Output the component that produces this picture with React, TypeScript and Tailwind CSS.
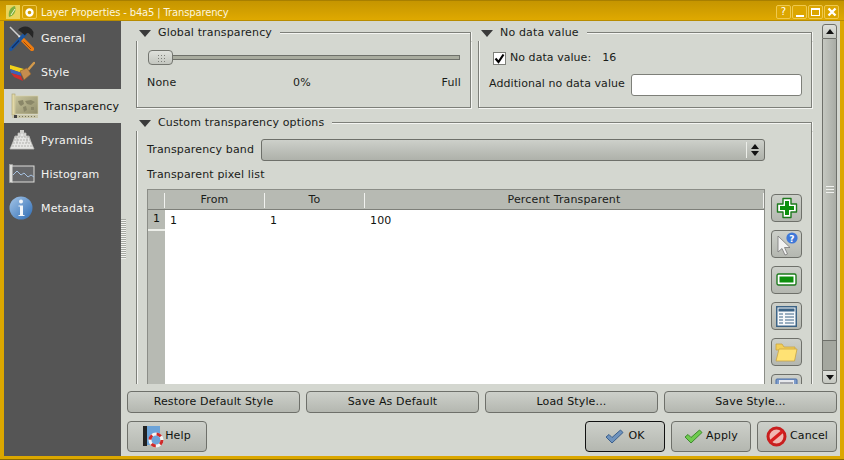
import React from "react";

const btn = "flex items-center justify-center rounded-[4px] border border-[#6e706a] bg-gradient-to-b from-[#cdd0ca] to-[#b4b7b0] text-[#10120f]";

function Tri() {
  return <svg width="12" height="7" viewBox="0 0 12 7" className="shrink-0"><path d="M0 0H12L6 7Z" fill="#3a3a3a" /></svg>;
}

function Group({ title, className, children }: { title: string; className: string; children: React.ReactNode }) {
  return (
    <div className={"flex flex-col " + className}>
      <div className="flex h-[17px] shrink-0 items-start">
        <div className="mt-[4px] w-[3px] shrink-0" />
        <div className="mt-[6px]"><Tri /></div>
        <span className="ml-[7px] whitespace-nowrap leading-[17px] text-[#1a1c19]">{title}</span>
        <div className="mb-0 ml-[8px] mt-[8px] h-[9px] flex-1 border-r border-t border-[#7d7f79] shadow-[inset_0_1px_0_#f4f5f2,1px_0_0_#f4f5f2]" />
      </div>
      <div className="min-h-0 flex-1 border-b border-l border-r border-[#7d7f79] shadow-[1px_1px_0_#f4f5f2,inset_1px_0_0_#f4f5f2]">{children}</div>
    </div>
  );
}

function Tools() {
  return (
    <svg width="25" height="25" viewBox="0 0 25 25">
      <path d="M1 1L11 11" stroke="#d0d0d0" strokeWidth="1.5" />
      <path d="M10 10L13 13" stroke="#ececec" strokeWidth="2.4" />
      <path d="M13 13L23 23" stroke="#ee7c10" strokeWidth="4.4" strokeLinecap="round" />
      <path d="M14.5 15.5L22 23" stroke="#9c4804" strokeWidth="1" />
      <path d="M2 23L16 8" stroke="#1c56a0" strokeWidth="3.8" strokeLinecap="round" />
      <path d="M3 22L10 14.5" stroke="#0f2f66" strokeWidth="1.2" />
      <path d="M9 4C13 -1 21 -1 24.5 6L24 12L20.5 8C19 6 17 7 16 9.5L12 6C11 5 10 5 9 4Z" fill="#262626" />
    </svg>
  );
}

function StyleIcon() {
  return (
    <svg width="26" height="22" viewBox="0 0 26 22">
      <path d="M1 4L15 8L13 12L1 8Z" fill="#f2d21a" />
      <path d="M1 8L13 12L12 15L2 12Z" fill="#3f62b8" />
      <path d="M2 12L12 15L14 20L5 16Z" fill="#d42d2d" />
      <path d="M18 10L25 2" stroke="#d39a4b" strokeWidth="2.4" strokeLinecap="round" />
      <path d="M11 10L18 7L22 13L15 19Z" fill="#c58d4e" stroke="#8a5f2f" strokeWidth="0.6" />
    </svg>
  );
}

function MapIcon() {
  return (
    <svg width="28" height="26" viewBox="0 0 28 26">
      <defs>
        <linearGradient id="mapg" x1="0" y1="0" x2="1" y2="1"><stop offset="0" stopColor="#c9c59c" /><stop offset="1" stopColor="#8f8c6b" /></linearGradient>
      </defs>
      <rect x="1" y="1" width="3" height="21" fill="#e2d9a8" stroke="#a79e6d" strokeWidth="0.6" />
      <rect x="4" y="3" width="23" height="18" fill="url(#mapg)" stroke="#d9d3a8" strokeWidth="0.6" />
      <path d="M7 8L12 7L13 11L10 13L8 11ZM14 8L20 7L24 9L20 12L16 11ZM12 14L15 13L16 17L13 19ZM20 14L23 14L23 17L20 17Z" fill="#8a8768" />
      <rect x="1" y="22" width="26" height="3" fill="#c8c5a8" />
      <rect x="3" y="22" width="3" height="3" fill="#444" />
      <path d="M8 23.5H26" stroke="#77765f" strokeDasharray="1 2" />
    </svg>
  );
}

function PyramidIcon() {
  return (
    <svg width="26" height="22" viewBox="0 0 26 22">
      <path d="M9 4H17V7H20L22 13L25 20H1L4 13L6 7H9Z" fill="#e6e6e4" stroke="#bdbdb9" strokeWidth="0.8" />
      <path d="M11 1H15V4H11Z" fill="#cfcfcc" />
      <path d="M6 8H20M5 11H21M4 14H22M3 17H23" stroke="#9b9b98" strokeWidth="0.7" strokeDasharray="2 1" />
      <path d="M11 4V8M15 4V8M8 8V14M18 8V14" stroke="#a8a8a5" strokeWidth="0.6" />
    </svg>
  );
}

function HistIcon() {
  return (
    <svg width="26" height="20" viewBox="0 0 26 20">
      <rect x="0.5" y="0.5" width="3" height="18" fill="#dededb" stroke="#a5a5a2" strokeWidth="0.6" />
      <rect x="3" y="2" width="22" height="16" fill="#666769" stroke="#dcdcd9" strokeWidth="1" />
      <path d="M4 11L8 7L12 11L15 9L19 13L22 11L25 13" fill="none" stroke="#a6c1e0" strokeWidth="1" />
    </svg>
  );
}

function InfoIcon() {
  return (
    <svg width="24" height="24" viewBox="0 0 24 24">
      <defs>
        <linearGradient id="infog" x1="0" y1="0" x2="1" y2="1"><stop offset="0" stopColor="#a5c6e8" /><stop offset="1" stopColor="#2e6cb4" /></linearGradient>
      </defs>
      <circle cx="12" cy="12" r="11.5" fill="url(#infog)" />
      <circle cx="12" cy="5.5" r="2" fill="#f2f6fa" />
      <path d="M9.5 9.5H14V19H15.5V20H9.5V19H11V10.5H9.5Z" fill="#f2f6fa" />
    </svg>
  );
}

function Side({ icon, label, active }: { icon: React.ReactNode; label: string; active?: boolean }) {
  return (
    <div className={active ? "flex h-[34px] items-center bg-[#d4d7d0] pl-[7px] text-[#10120f]" : "flex h-[34px] items-center pl-[5px] text-[#f3f3f1]"}>
      <div className={active ? "flex w-[33px] shrink-0 justify-start" : "flex w-[32px] shrink-0 justify-start"}>{icon}</div>
      <span className="whitespace-nowrap pt-[3px]">{label}</span>
    </div>
  );
}

function PlusIcon() {
  return <svg width="22" height="22" viewBox="0 0 22 22"><path d="M7 1.5H15V7H20.5V15H15V20.5H7V15H1.5V7H7Z" fill="#fff" stroke="#1d7a1d" strokeWidth="1.4" strokeLinejoin="round" /><path d="M9 4H13V9H18V13H13V18H9V13H4V9H9Z" fill="#0d900d" /></svg>;
}
function CursorHelp() {
  return (
    <svg width="24" height="26" viewBox="0 0 24 26">
      <path d="M3 5V21L7 17.5L10 24L12.5 23L9.5 16.5H15Z" fill="#f2f2f2" stroke="#777" strokeWidth="0.8" />
      <circle cx="17" cy="7" r="5.6" fill="#3f78d8" />
      <text x="17" y="10.5" fontSize="9" fontWeight="700" fill="#fff" textAnchor="middle" fontFamily="DejaVu Sans">?</text>
    </svg>
  );
}
function MinusIcon() {
  return <svg width="22" height="14" viewBox="0 0 22 14"><rect x="1" y="1" width="19" height="11" rx="1.5" fill="#fff" stroke="#1d7a1d" strokeWidth="1.4" /><rect x="3.5" y="3.5" width="14" height="6" fill="#0d900d" /></svg>;
}
function TableIcon() {
  return (
    <svg width="21" height="21" viewBox="0 0 21 21">
      <rect x="0.75" y="0.75" width="19.5" height="19.5" fill="#f7f9fb" stroke="#3d6486" strokeWidth="1.5" />
      <rect x="2.5" y="2.5" width="16" height="3" fill="#3d6486" />
      <path d="M3 8H7M9 8H18M3 11H7M9 11H18M3 14H7M9 14H18M3 17H7M9 17H18" stroke="#3d6486" strokeWidth="1" />
    </svg>
  );
}
function FolderIcon() {
  return (
    <svg width="23" height="19" viewBox="0 0 23 19">
      <path d="M1 1H7L9 4H20V7H1Z" fill="#f3cf58" stroke="#c9a443" strokeWidth="0.8" />
      <path d="M4 6H22L19.5 18H1Z" fill="#ffe274" stroke="#c9a443" strokeWidth="0.8" />
    </svg>
  );
}
function SaveIcon() {
  return (
    <svg width="23" height="20" viewBox="0 0 23 20">
      <rect x="1" y="1" width="21" height="18" rx="1" fill="#7d9bc9" stroke="#4a6ea8" />
      <rect x="4" y="2" width="15" height="12" fill="#e6e8ec" />
      <path d="M5 5H18M5 8H18M5 11H18" stroke="#60636a" />
    </svg>
  );
}
function IconBtn({ children }: { children: React.ReactNode }) {
  return <div className={btn + " h-[28px] w-[31px] shrink-0"}>{children}</div>;
}

function Check({ fill, edge }: { fill: string; edge: string }) {
  return <svg width="19" height="15" viewBox="0 0 19 15"><path d="M1 8L4 5.5L7 8.5L15.5 1L18 3.5L7 14Z" fill={fill} stroke={edge} strokeWidth="1" strokeLinejoin="round" /></svg>;
}

function HelpIcon() {
  return (
    <svg width="21" height="22" viewBox="0 0 21 22">
      <rect x="0" y="0" width="4" height="20" fill="#222" />
      <rect x="4" y="0" width="13" height="19" fill="#6ca3d8" />
      <circle cx="13" cy="14" r="6" fill="none" stroke="#f4f4f4" strokeWidth="3" />
      <circle cx="13" cy="14" r="6" fill="none" stroke="#cf2a2a" strokeWidth="3" strokeDasharray="4.7 4.7" />
    </svg>
  );
}
function CancelIcon() {
  return (
    <svg width="21" height="21" viewBox="0 0 21 21">
      <circle cx="10.5" cy="10.5" r="8.5" fill="#f0b9b3" stroke="#c81e1e" strokeWidth="3" />
      <path d="M4 16L17 5" stroke="#d81f1f" strokeWidth="3.2" />
    </svg>
  );
}

function TitleBtn({ children }: { children: React.ReactNode }) {
  return <div className="flex h-[14px] w-[15px] items-center justify-center rounded-[2px] border border-[#efc94e] bg-[#dca600] text-[10px] leading-none text-white">{children}</div>;
}

export default function App() {
  return (
    <div className="flex h-[460px] w-[844px] flex-col overflow-hidden border-b border-[#8a6a00] bg-[#dba700] font-['DejaVu_Sans',sans-serif] text-[11px] tracking-[0.15px]">
      <div className="flex h-[21px] shrink-0 items-center border-t border-b border-t-[#a87f00] border-b-[#b88c00] bg-gradient-to-b from-[#c59500] to-[#dfa900] pl-[6px] pr-[5px] pt-[3px]">
        <svg width="14" height="16" viewBox="0 0 14 16" className="shrink-0">
          <rect x="0" y="1" width="14" height="14" fill="#e9d45a" />
          <path d="M9 2C4 3 2 8 3 13C7 12 11 8 9 2Z" fill="#7fae3c" />
          <path d="M5 11L9 5" stroke="#f2f6d0" />
        </svg>
        <div className="ml-[2px] flex h-[14px] w-[15px] items-center justify-center rounded-[2px] border border-[#efc94e]">
          <svg width="9" height="9" viewBox="0 0 9 9"><circle cx="4.5" cy="4.5" r="3" fill="none" stroke="#fff" strokeWidth="2.4" /></svg>
        </div>
        <span className="ml-[4px] text-[10px] tracking-[-0.15px] text-[#fdf6dd]">Layer Properties - b4a5 | Transparency</span>
        <div className="ml-auto flex gap-[1px]">
          <TitleBtn>?</TitleBtn>
          <TitleBtn><span className="mt-[7px] h-[2px] w-[8px] bg-white" /></TitleBtn>
          <TitleBtn><span className="h-[8px] w-[9px] border border-t-2 border-white" /></TitleBtn>
          <TitleBtn>
            <svg width="10" height="10" viewBox="0 0 10 10"><path d="M1.5 1.5L8.5 8.5M8.5 1.5L1.5 8.5" stroke="#fff" strokeWidth="2.4" /></svg>
          </TitleBtn>
        </div>
      </div>

      <div className="mx-[4px] mb-[3px] flex min-h-0 flex-1 bg-[#d4d7d0]">
        <div className="flex w-[117px] shrink-0 flex-col bg-[#555555]">
          <Side icon={<Tools />} label="General" />
          <Side icon={<StyleIcon />} label="Style" />
          <Side icon={<MapIcon />} label="Transparency" active />
          <Side icon={<PyramidIcon />} label="Pyramids" />
          <Side icon={<HistIcon />} label="Histogram" />
          <Side icon={<InfoIcon />} label="Metadata" />
        </div>

        <div className="flex w-[5px] shrink-0 flex-col items-center justify-center">
          <div className="h-[40px] w-[5px] bg-[repeating-linear-gradient(to_bottom,#a5a8a1_0,#a5a8a1_1px,#f1f2ef_1px,#f1f2ef_2px)]" />
        </div>

        <div className="flex min-w-0 flex-1 flex-col pl-[1px] pr-[3px]">
          <div className="flex h-[363px] shrink-0 pt-[3px]">
            <div className="flex min-w-0 flex-1 flex-col overflow-hidden pl-[9px] pr-[10px]">
              <div className="flex h-[84px] shrink-0 gap-[7px]">
                <Group title="Global transparency" className="w-[335px]">
                  <div className="flex flex-col pl-[10px] pr-[9px] pt-[9px]">
                    <div className="relative ml-[1px] mr-[1px] flex h-[15px] items-center">
                      <div className="h-[5px] flex-1 border border-[#6e706a] bg-[#a9ac9f]" />
                      <div className="absolute left-0 top-0 flex h-[15px] w-[25px] items-center justify-center rounded-[4px] border border-[#73756f] bg-gradient-to-b from-[#dfe1dc] to-[#c3c6bf]">
                        <div className="h-[8px] w-[8px] bg-[radial-gradient(#7d7f79_1px,transparent_1px)] bg-[length:3px_3px]" />
                      </div>
                    </div>
                    <div className="mt-[10px] flex justify-between text-[#1a1c19]">
                      <span>None</span><span className="mr-[14px]">0%</span><span>Full</span>
                    </div>
                  </div>
                </Group>
                <Group title="No data value" className="w-[334px]">
                  <div className="flex flex-col pl-[10px] pr-[9px] pt-[9px] text-[#1a1c19]">
                    <div className="flex items-center pl-[4px]">
                      <div className="flex h-[13px] w-[13px] items-center justify-center border border-[#7d7f79] bg-white">
                        <svg width="11" height="11" viewBox="0 0 11 11"><path d="M1.5 5.5L4.5 9L9.5 1.5" fill="none" stroke="#000" strokeWidth="2.2" /></svg>
                      </div>
                      <span className="ml-[4px] tracking-[0.05px]">No data value:</span>
                      <span className="ml-[11px]">16</span>
                    </div>
                    <div className="mt-[7px] flex items-center justify-between">
                      <span className="tracking-[0.07px]">Additional no data value</span>
                      <div className="h-[22px] w-[171px] rounded-[3px] border border-[#7d7f79] bg-white" />
                    </div>
                  </div>
                </Group>
              </div>

              <Group title="Custom transparency options" className="mt-[6px] w-[676px] flex-1">
                <div className="flex h-full flex-col px-[10px] pt-[8px] text-[#1a1c19]">
                  <div className="flex h-[22px] shrink-0 items-center">
                    <span className="w-[114px] shrink-0">Transparency band</span>
                    <div className="flex h-[22px] w-[504px] items-center justify-end rounded-[3px] border border-[#6e706a] bg-gradient-to-b from-[#cdd0ca] to-[#aeb1aa]">
                      <div className="mr-[5px] flex h-[16px] w-[13px] flex-col items-center justify-center gap-[2px] border-l border-[#eceee9] pl-[4px]">
                        <svg width="8" height="5" viewBox="0 0 8 5"><path d="M0 5L4 0L8 5Z" fill="#111" /></svg>
                        <svg width="8" height="5" viewBox="0 0 8 5"><path d="M0 0L8 0L4 5Z" fill="#111" /></svg>
                      </div>
                    </div>
                  </div>
                  <div className="mt-[5px] h-[17px] shrink-0 leading-[17px]">Transparent pixel list</div>
                  <div className="mt-[6px] flex min-h-0 flex-1 gap-[6px]">
                    <div className="flex w-[618px] shrink-0 flex-col border-l border-r border-t border-[#8b8d87]">
                      <div className="flex h-[20px] shrink-0 items-center border-b border-[#7d7f79] bg-[#b7bab3] pt-[1px] text-[#1a1c19]">
                        <div className="h-[15px] w-[17px] shrink-0 border-r border-[#f1f2ef]" />
                        <div className="flex h-[15px] w-[100px] items-center justify-center border-r border-[#f1f2ef]">From</div>
                        <div className="flex h-[15px] w-[100px] items-center justify-center border-r border-[#f1f2ef]">To</div>
                        <div className="flex h-[15px] flex-1 items-center justify-center border-r border-[#f1f2ef]">Percent Transparent</div>
                      </div>
                      <div className="flex min-h-0 flex-1">
                        <div className="flex w-[17px] shrink-0 flex-col bg-[#b7bab3]">
                          <div className="flex h-[21px] items-center justify-center border-b-2 border-[#eceee9] text-[#10120f]">1</div>
                        </div>
                        <div className="flex flex-1 bg-white text-[#10120f]">
                          <div className="w-[100px] pl-[5px] leading-[21px]">1</div>
                          <div className="w-[100px] pl-[5px] leading-[21px]">1</div>
                          <div className="pl-[5px] leading-[21px]">100</div>
                        </div>
                      </div>
                    </div>
                    <div className="flex flex-col gap-[8px] pt-[5px]">
                      <IconBtn><PlusIcon /></IconBtn>
                      <IconBtn><CursorHelp /></IconBtn>
                      <IconBtn><MinusIcon /></IconBtn>
                      <IconBtn><TableIcon /></IconBtn>
                      <IconBtn><FolderIcon /></IconBtn>
                      <IconBtn><SaveIcon /></IconBtn>
                    </div>
                  </div>
                </div>
              </Group>
            </div>

            <div className="flex w-[15px] shrink-0 flex-col">
              <div className="flex h-[15px] shrink-0 items-center justify-center rounded-t-[3px] border border-[#6e706a] bg-gradient-to-b from-[#dfe1dc] to-[#c4c7c0]">
                <svg width="8" height="5" viewBox="0 0 8 5"><path d="M0 5L4 0L8 5Z" fill="#111" /></svg>
              </div>
              <div className="flex h-[301px] shrink-0 items-center justify-center border-x border-[#6e706a] bg-gradient-to-r from-[#c5c8c1] to-[#a9aca5]">
                <div className="h-[7px] w-[8px] bg-[repeating-linear-gradient(to_bottom,#f1f2ef_0,#f1f2ef_1px,transparent_1px,transparent_3px)]" />
              </div>
              <div className="flex-1 border-x border-t border-[#6e706a] bg-[#a4a79f]" />
              <div className="flex h-[14px] shrink-0 items-center justify-center rounded-b-[3px] border border-[#6e706a] bg-gradient-to-b from-[#dfe1dc] to-[#c4c7c0]">
                <svg width="8" height="5" viewBox="0 0 8 5"><path d="M0 0L8 0L4 5Z" fill="#111" /></svg>
              </div>
            </div>
          </div>

          <div className="mt-[7px] flex h-[22px] shrink-0 gap-[6px]">
            {["Restore Default Style", "Save As Default", "Load Style...", "Save Style..."].map((t) => (
              <div key={t} className={btn + " w-[173px]"}>{t}</div>
            ))}
          </div>

          <div className="mt-[8px] flex h-[31px] shrink-0 justify-between">
            <div className={btn + " w-[80px] gap-[1px]"}><span className="mt-[1px]"><HelpIcon /></span><span>Help</span></div>
            <div className="flex gap-[6px]">
              <div className={btn.replace("border-[#6e706a]", "border-[#111]") + " w-[80px] gap-[3px]"}><Check fill="#6f93bd" edge="#3a5f8c" /><span className="ml-[1px]">OK</span></div>
              <div className={btn + " w-[80px] gap-[3px]"}><Check fill="#6fcb4f" edge="#3d8a2d" /><span>Apply</span></div>
              <div className={btn + " w-[80px] gap-[3px]"}><CancelIcon /><span>Cancel</span></div>
            </div>
          </div>
        </div>
      </div>
    </div>
  );
}
